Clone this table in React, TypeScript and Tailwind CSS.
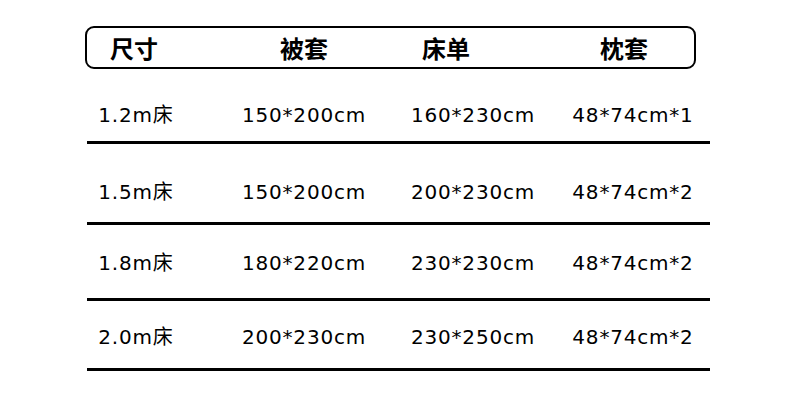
const headers = [
  { label: "尺寸", ml: "ml-[23px]" },
  { label: "被套", ml: "ml-[122px]" },
  { label: "床单", ml: "ml-[94px]" },
  { label: "枕套", ml: "ml-[130px]" },
];

// row heights / text offsets differ a little in the original, keep them per row
const rows = [
  { size: "1.2m床", duvet: "150*200cm", sheet: "160*230cm", pillow: "48*74cm*1", box: "h-[75px] pt-[34px]" },
  { size: "1.5m床", duvet: "150*200cm", sheet: "200*230cm", pillow: "48*74cm*2", box: "h-[81px] pt-[36px]" },
  { size: "1.8m床", duvet: "180*220cm", sheet: "230*230cm", pillow: "48*74cm*2", box: "h-[76px] pt-[26px]" },
  { size: "2.0m床", duvet: "200*230cm", sheet: "230*250cm", pillow: "48*74cm*2", box: "h-[70px] pt-[24px]" },
];

function Cell({ children }: { children: string }) {
  return <div className="flex justify-center whitespace-nowrap">{children}</div>;
}

export default function App() {
  return (
    <div
      className="w-[790px] h-[414px] bg-white text-black pt-[26px] overflow-hidden"
      style={{ fontFamily: '"DejaVu Sans", "Noto Sans CJK SC", sans-serif' }}
    >
      <div className="ml-[85px] w-[611px] h-[43px] border-2 border-black rounded-[9px] flex items-center">
        {headers.map((h) => (
          <span
            key={h.label}
            className={`${h.ml} text-[24px] leading-none font-bold`}
            style={{ fontFamily: '"Noto Sans CJK SC", sans-serif' }}
          >
            {h.label}
          </span>
        ))}
      </div>

      {rows.map((r) => (
        <div key={r.size} className={`ml-[87px] w-[623px] border-b-[3px] border-black ${r.box}`}>
          <div className="grid grid-cols-[98px_238px_100px_220px] text-[20px] leading-[24px] tracking-[0.8px]">
            <Cell>{r.size}</Cell>
            <Cell>{r.duvet}</Cell>
            <Cell>{r.sheet}</Cell>
            <Cell>{r.pillow}</Cell>
          </div>
        </div>
      ))}
    </div>
  );
}
